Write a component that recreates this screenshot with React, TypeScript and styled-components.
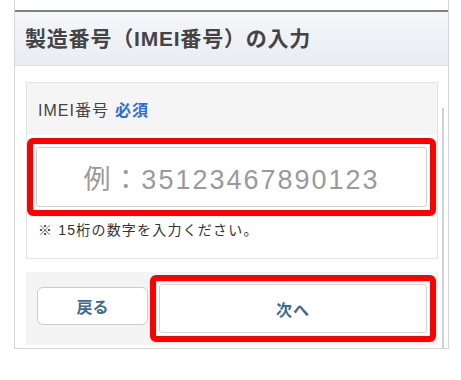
import React from 'react';
import styled, { createGlobalStyle } from 'styled-components';

const GlobalStyle = createGlobalStyle`
  body {
    margin: 0;
    background: #fff;
    font-family: "Liberation Sans", "Noto Sans CJK JP", sans-serif;
  }
`;

const Frame = styled.div`
  position: relative;
  margin-left: 14px;
  width: 433px;
  height: 338px;
  border-left: 1px solid #d6d6d6;
  border-right: 1px solid #d6d6d6;
  border-bottom: 1px solid #d6d6d6;
  padding-top: 10px;
  box-sizing: content-box;
`;

const Header = styled.div`
  border-top: 2px solid #7b8089;
  border-bottom: 1px solid #dfe3e8;
  background: linear-gradient(#f5f7f9, #e8edf2);
  display: flex;
  align-items: center;
  padding-left: 10px;
  padding-bottom: 3px;
  box-sizing: border-box;
  height: 56px;
  font-size: 21px;
  font-weight: bold;
  color: #444;
  letter-spacing: 0.8px;
`;

const Body = styled.div`
  padding: 16px 10px 0 11px;
`;

const Scrollbar = styled.div`
  position: absolute;
  right: 4px;
  top: 108px;
  bottom: 0;
  width: 2px;
  background: #d2d2d2;
`;

const Card = styled.div`
  border: 1px solid #e3e3e3;
  background: #fff;
`;

const LabelBar = styled.div`
  height: 52px;
  background: #f5f5f5;
  display: flex;
  align-items: center;
  padding-left: 11px;
  font-size: 16px;
  letter-spacing: 1px;
  color: #444;
`;

const Required = styled.span`
  margin-left: 6px;
  color: #2a6fd8;
  font-weight: bold;
`;

const Highlight = styled.div<{ $pad: number }>`
  border: 6px solid #ff0000;
  border-radius: 6px;
  padding: ${(p) => p.$pad}px;
  background: #fff;
`;

const InputWrap = styled.div`
  margin: 3px 1px 0 0;
`;

const Field = styled.div`
  height: 58px;
  border: 1px solid #cfcfcf;
  border-radius: 3px;
  display: flex;
  align-items: center;
  justify-content: center;
  font-size: 27px;
  color: #9a9a9a;
  letter-spacing: 2px;
`;

const Hint = styled.div`
  padding: 3px 0 19px 11px;
  font-size: 14px;
  letter-spacing: 1.2px;
  color: #333;
`;

const ButtonRow = styled.div`
  margin-top: 13px;
  height: 73px;
  background: #f4f4f4;
  display: flex;
  align-items: flex-start;
  padding-left: 11px;
`;

const BackButton = styled.div`
  margin-top: 15px;
  width: 109px;
  height: 36px;
  border: 1px solid #cccccc;
  border-radius: 6px;
  background: #fff;
  display: flex;
  align-items: center;
  justify-content: center;
  font-size: 16px;
  font-weight: bold;
  color: #3d6b92;
`;

const NextWrap = styled.div`
  margin: 3px 0 0 2px;
  width: 286px;
`;

const NextButton = styled.div`
  height: 47px;
  border: 1px solid #d4d4d4;
  border-radius: 3px;
  display: flex;
  align-items: center;
  justify-content: center;
  font-size: 16px;
  font-weight: bold;
  letter-spacing: 1px;
  color: #3d6b92;
`;

const App: React.FC = () => {
  return (
    <>
      <GlobalStyle />
      <Frame>
        <Header>製造番号（IMEI番号）の入力</Header>
        <Body>
          <Card>
            <LabelBar>
              IMEI番号<Required>必須</Required>
            </LabelBar>
            <InputWrap>
              <Highlight $pad={3}>
                <Field>例：35123467890123</Field>
              </Highlight>
            </InputWrap>
            <Hint>※ 15桁の数字を入力ください。</Hint>
          </Card>
          <ButtonRow>
            <BackButton>戻る</BackButton>
            <NextWrap>
              <Highlight $pad={3}>
                <NextButton>次へ</NextButton>
              </Highlight>
            </NextWrap>
          </ButtonRow>
        </Body>
        <Scrollbar />
      </Frame>
    </>
  );
};

export default App;
